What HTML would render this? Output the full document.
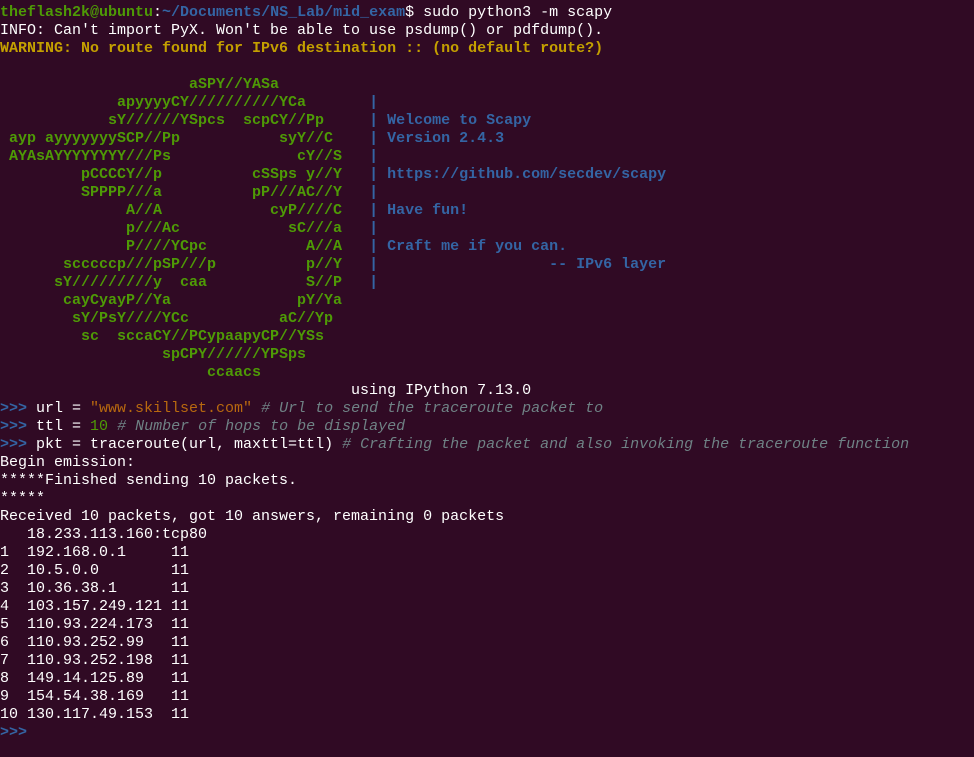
<!DOCTYPE html>
<html><head><meta charset="utf-8"><style>
html,body{margin:0;padding:0;background:#300a24;width:974px;height:757px;overflow:hidden}
pre{margin:0;padding:4px 0 0 0;font-family:"Liberation Mono",monospace;font-size:15px;line-height:18px;color:#ffffff;white-space:pre}
.g{color:#4e9a06;font-weight:bold}
.b{color:#3465a4;font-weight:bold}
.bl{color:#3465a4;font-weight:bold}
.y{color:#c4a000;font-weight:bold}
.s{color:#b8690f}
.n{color:#4e9a06}
.c{color:#6f8285;font-style:italic}
.p{color:#3465a4;font-weight:bold}
</style></head><body><pre><span class="g">theflash2k@ubuntu</span>:<span class="b">~/Documents/NS_Lab/mid_exam</span>$ sudo python3 -m scapy
INFO: Can't import PyX. Won't be able to use psdump() or pdfdump().
<span class="y">WARNING: No route found for IPv6 destination :: (no default route?)</span>

<span class="g">                     aSPY//YASa</span>
<span class="g">             apyyyyCY//////////YCa       </span><span class="bl">|</span>
<span class="g">            sY//////YSpcs  scpCY//Pp     </span><span class="bl">| Welcome to Scapy</span>
<span class="g"> ayp ayyyyyyySCP//Pp           syY//C    </span><span class="bl">| Version 2.4.3</span>
<span class="g"> AYAsAYYYYYYYY///Ps              cY//S   </span><span class="bl">|</span>
<span class="g">         pCCCCY//p          cSSps y//Y   </span><span class="bl">| https://github.com/secdev/scapy</span>
<span class="g">         SPPPP///a          pP///AC//Y   </span><span class="bl">|</span>
<span class="g">              A//A            cyP////C   </span><span class="bl">| Have fun!</span>
<span class="g">              p///Ac            sC///a   </span><span class="bl">|</span>
<span class="g">              P////YCpc           A//A   </span><span class="bl">| Craft me if you can.</span>
<span class="g">       scccccp///pSP///p          p//Y   </span><span class="bl">|                   -- IPv6 layer</span>
<span class="g">      sY/////////y  caa           S//P   </span><span class="bl">|</span>
<span class="g">       cayCyayP//Ya              pY/Ya</span>
<span class="g">        sY/PsY////YCc          aC//Yp</span>
<span class="g">         sc  sccaCY//PCypaapyCP//YSs</span>
<span class="g">                  spCPY//////YPSps</span>
<span class="g">                       ccaacs</span>
                                       using IPython 7.13.0
<span class="p">&gt;&gt;&gt;</span> url = <span class="s">"www.skillset.com"</span> <span class="c"># Url to send the traceroute packet to</span>
<span class="p">&gt;&gt;&gt;</span> ttl = <span class="n">10</span> <span class="c"># Number of hops to be displayed</span>
<span class="p">&gt;&gt;&gt;</span> pkt = traceroute(url, maxttl=ttl) <span class="c"># Crafting the packet and also invoking the traceroute function</span>
Begin emission:
*****Finished sending 10 packets.
*****
Received 10 packets, got 10 answers, remaining 0 packets
   18.233.113.160:tcp80
1  192.168.0.1     11
2  10.5.0.0        11
3  10.36.38.1      11
4  103.157.249.121 11
5  110.93.224.173  11
6  110.93.252.99   11
7  110.93.252.198  11
8  149.14.125.89   11
9  154.54.38.169   11
10 130.117.49.153  11
<span class="p">&gt;&gt;&gt;</span> </pre></body></html>
